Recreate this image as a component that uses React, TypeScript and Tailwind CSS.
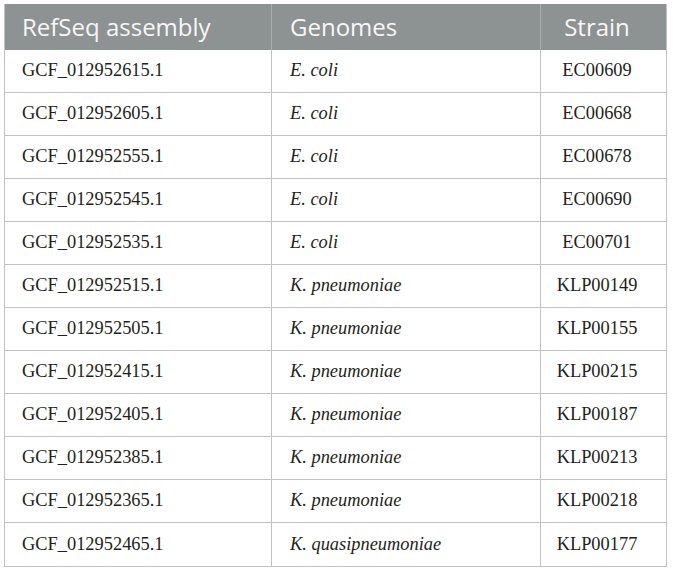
const rows = [
  { id: 'GCF_012952615.1', genome: 'E. coli', strain: 'EC00609' },
  { id: 'GCF_012952605.1', genome: 'E. coli', strain: 'EC00668' },
  { id: 'GCF_012952555.1', genome: 'E. coli', strain: 'EC00678' },
  { id: 'GCF_012952545.1', genome: 'E. coli', strain: 'EC00690' },
  { id: 'GCF_012952535.1', genome: 'E. coli', strain: 'EC00701' },
  { id: 'GCF_012952515.1', genome: 'K. pneumoniae', strain: 'KLP00149' },
  { id: 'GCF_012952505.1', genome: 'K. pneumoniae', strain: 'KLP00155' },
  { id: 'GCF_012952415.1', genome: 'K. pneumoniae', strain: 'KLP00215' },
  { id: 'GCF_012952405.1', genome: 'K. pneumoniae', strain: 'KLP00187' },
  { id: 'GCF_012952385.1', genome: 'K. pneumoniae', strain: 'KLP00213' },
  { id: 'GCF_012952365.1', genome: 'K. pneumoniae', strain: 'KLP00218' },
  { id: 'GCF_012952465.1', genome: 'K. quasipneumoniae', strain: 'KLP00177' },
];

export default function App() {
  return (
    <div className="min-h-screen bg-white pl-1 pt-1">
      <div className="w-[663px] border border-t-0 border-[#c2c2c2]">
        {/* Header */}
        <div className="grid h-[46px] grid-cols-[267px_269px_125px] bg-[#8d9292] font-['Open_Sans',sans-serif] text-[24px] text-[#f7f7f7]">
          <div className="flex items-center border-r border-[#a9adad] pl-[17px]">RefSeq assembly</div>
          <div className="flex items-center border-r border-[#a9adad] pl-[18px]">Genomes</div>
          <div className="flex items-center justify-center pr-[15px] pl-[2px]">Strain</div>
        </div>

        {/* Body */}
        {rows.map((r, i) => (
          <div
            key={r.id}
            className={`grid h-[43px] grid-cols-[267px_269px_125px] font-['Liberation_Serif',serif] text-[18.4px] text-[#231f20] ${
              i < rows.length - 1 ? 'border-b border-[#c2c2c2]' : ''
            }`}
          >
            <div className="flex items-center border-r border-[#c2c2c2] pl-[17px]">{r.id}</div>
            <div className="flex items-center border-r border-[#c2c2c2] pl-[18px] italic">{r.genome}</div>
            <div className="flex items-center justify-center pr-[15px] pl-[2px]">{r.strain}</div>
          </div>
        ))}
      </div>
    </div>
  );
}
